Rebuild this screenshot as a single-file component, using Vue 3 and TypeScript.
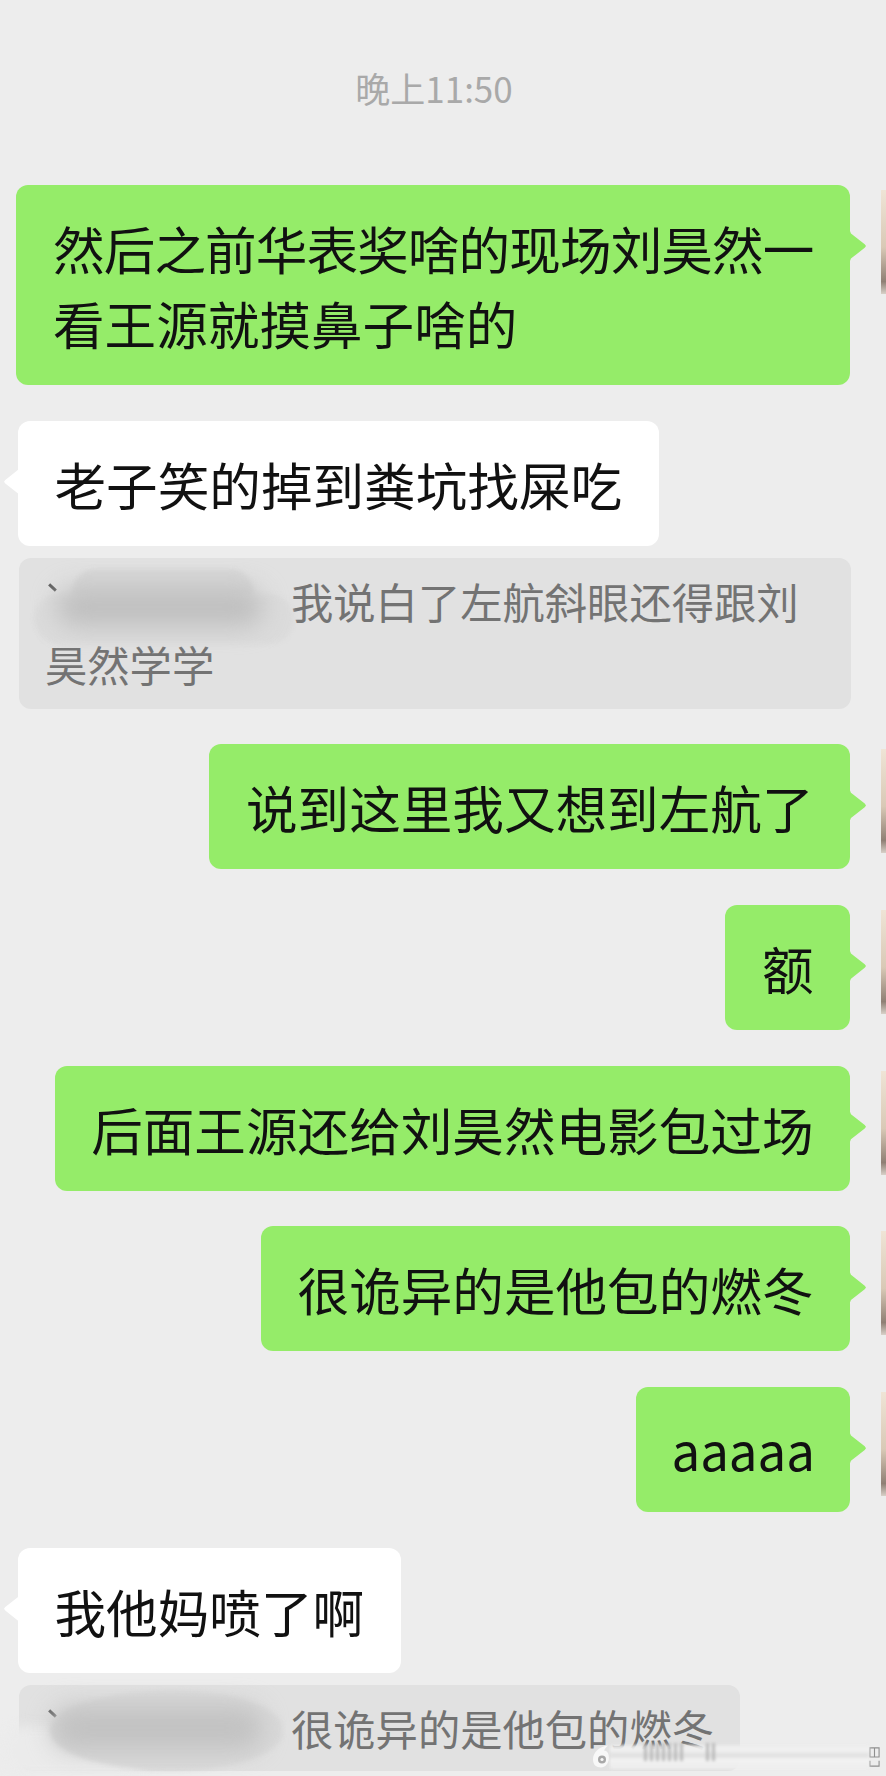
<script setup lang="ts">
interface Row { text: string; latin: boolean; }
const mine: Row[] = ['说到这里我又想到左航了', '额', '后面王源还给刘昊然电影包过场', '很诡异的是他包的燃冬', 'aaaaa'].map(
  (text) => ({ text, latin: /^[a-z]+$/.test(text) })
);
const streaks: number[] = [34, 40, 46, 52, 58, 64, 70, 96, 102];
</script>

<template>
  <main class="chat">
    <div class="time">晚上11:50</div>

    <div class="row me first">
      <div class="bubble green wide">
        <span class="line tight">然后之前华表奖啥的现场刘昊然一</span>
        <span class="line loose">看王源就摸鼻子啥的</span>
      </div>
      <i class="avatar"></i>
    </div>
    <div class="row them gap"><div class="bubble white">老子笑的掉到粪坑找屎吃</div></div>

    <div class="quote q1">
      <span class="tick t1"></span>
      <span class="smudge s1"></span><span class="smudge s2"></span><span class="core c1"></span>
      <span class="mask"></span>我说白了左航斜眼还得跟刘昊然学学
    </div>

    <div v-for="m in mine" :key="m.text" class="row me gap">
      <div class="bubble green" :class="{ latin: m.latin }">{{ m.text }}</div>
      <i class="avatar"></i>
    </div>

    <div class="row them gap"><div class="bubble white">我他妈喷了啊</div></div>

    <div class="quote q2">
      <span class="tick t2"></span>
      <span class="mask"></span>很诡异的是他包的燃冬
    </div>
    <span class="smudge s4"></span><span class="smudge s3"></span><span class="core c2"></span>

    <div class="mark">
      <svg class="logo" viewBox="0 0 18 24" aria-hidden="true">
        <path d="M1 15C1 8 7 2 16 1c-2 2-3 3-4 5 3 0 5 3 5 7 0 6-4 10-8 10-5 0-8-3-8-8z" fill="#f8f8f8" />
        <circle cx="10" cy="15" r="4" fill="#a8a8a8" />
        <circle cx="10" cy="15" r="1.6" fill="#f8f8f8" />
      </svg>
      <span class="markbar">
        <i v-for="s in streaks" :key="s" class="streak" :style="{ left: s + 'px' }"></i>
      </span>
      <svg class="endmark" viewBox="0 0 12 22" aria-hidden="true">
        <path d="M1 1h10v10H1zM6 1v10M1 15v6h10v-6" fill="none" stroke="#8f8f8f" stroke-width="1.2" />
      </svg>
    </div>
  </main>
</template>

<style>
html, body { margin: 0; background: #ededed; }
</style>

<style scoped>
.chat {
  position: relative;
  width: 886px;
  height: 1776px;
  overflow: hidden;
  box-sizing: border-box;
  padding: 63px 0 0 18px;
  background: #ededed;
  font-family: "Noto Sans CJK SC", "Noto Sans", sans-serif;
  display: flex;
  flex-direction: column;
  align-items: flex-start;
}
.chat > * { flex: none; }
.time {
  align-self: center;
  margin-left: -36px;
  height: 50px;
  line-height: 50px;
  font-size: 35px;
  color: #a9a9a9;
}
.row { display: flex; position: relative; }
.me { justify-content: flex-end; margin-left: -18px; width: 850px; }
.first { margin-top: 72px; }
.gap { margin-top: 35.7px; }
.bubble {
  position: relative;
  box-sizing: border-box;
  padding: 25px 36.5px;
  border-radius: 12px;
  font-size: 51.6px;
  line-height: 75px;
  color: #111;
}
.wide { width: 834px; padding-left: 37px; padding-right: 20px; }
.line { display: block; white-space: nowrap; }
.tight { letter-spacing: -0.9px; }
.loose { letter-spacing: 0; }
.latin { padding-left: 35px; padding-right: 35px; font-size: 51px; }
.green { background: #95ec69; }
.white { background: #fff; }
.green::after, .white::after {
  content: "";
  position: absolute;
  top: 46px;
  width: 16px;
  height: 30px;
}
.green::after {
  right: -16px;
  background: #95ec69;
  clip-path: polygon(0 0, 6% 8%, 92% 44%, 100% 50%, 92% 56%, 6% 92%, 0 100%);
}
.white::after {
  left: -14px;
  background: #fff;
  clip-path: polygon(100% 0, 94% 8%, 8% 44%, 0 50%, 8% 56%, 94% 92%, 100% 100%);
}
.avatar {
  position: absolute;
  left: 881px;
  top: 5px;
  width: 5px;
  height: 104px;
  background: linear-gradient(#efe4d6, #d9c9b6 55%, #8f7f74 88%, #d8d0c8);
}
.quote {
  position: relative;
  margin-top: 12px;
  margin-left: 1px;
  box-sizing: border-box;
  background: #e1e1e1;
  border-radius: 12px;
  color: #737373;
  font-size: 42.3px;
  line-height: 63px;
}
.q1 { width: 832px; height: 151px; padding: 11px 26px 0 26px; }
.q2 { width: 721px; height: 86px; padding: 11px 12px 0 26px; }
.mask { display: inline-block; width: 246px; height: 40px; vertical-align: top; }
.tick {
  position: absolute;
  width: 9px;
  height: 3px;
  background: #5d5d5d;
  transform: rotate(42deg);
}
.t1 { left: 29px; top: 28px; }
.t2 { left: 29px; top: 27px; }
.smudge { position: absolute; border-radius: 26px; }
.core { position: absolute; border-radius: 20px; filter: blur(12px); }
.s1 { left: 54px; top: 11px; width: 180px; height: 64px; background: #d6d6d6; filter: blur(2px); border-radius: 22px; }
.s2 { left: 15px; top: 36px; width: 260px; height: 50px; background: #dbdbdb; filter: blur(2px); }
.c1 { left: 38px; top: 30px; width: 206px; height: 38px; background: #bfbfbf; }
.s3 {
  left: 50px;
  top: 1691px;
  width: 232px;
  height: 79px;
  background: #d8d8d8;
  border-radius: 50% 46% 46% 50%;
  filter: blur(2px);
}
.s4 { left: 0; top: 1726px; width: 150px; height: 50px; background: #ebebeb; filter: blur(6px); }
.c2 { left: 52px; top: 1706px; width: 210px; height: 44px; background: #c2c2c2; }
.mark {
  position: absolute;
  left: 592px;
  top: 1744px;
  width: 290px;
  height: 25px;
  display: flex;
  align-items: center;
}
.logo { width: 18px; height: 25px; flex: none; }
.markbar {
  position: relative;
  flex: 1;
  height: 24px;
  background: linear-gradient(#ebebeb, #f4f4f4 20%, #dedede 45%, #f4f4f4 60%, #eeeeee);
  opacity: .92;
  filter: blur(1.5px);
}
.streak {
  position: absolute;
  top: -2px;
  width: 3px;
  height: 18px;
  background: #aaa;
  opacity: .8;
}
.endmark { width: 11px; height: 24px; flex: none; margin-right: 2px; }
</style>
